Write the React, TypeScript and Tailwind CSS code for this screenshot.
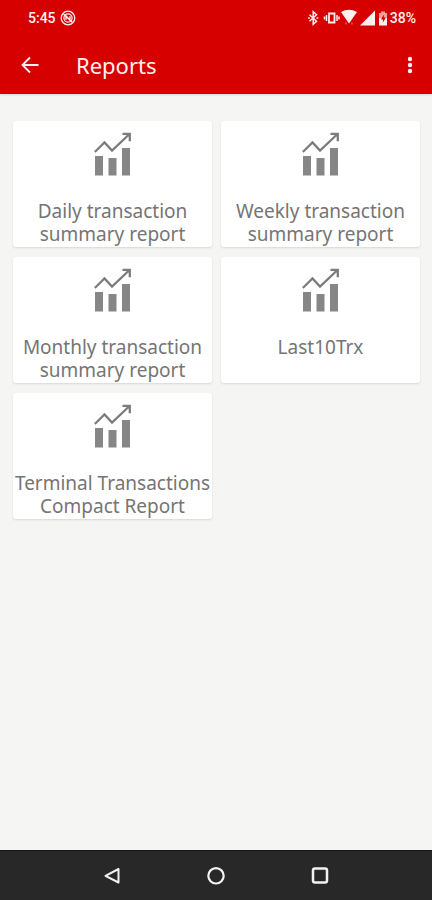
const reports = [
  'Daily transaction summary report',
  'Weekly transaction summary report',
  'Monthly transaction summary report',
  'Last10Trx',
  'Terminal Transactions Compact Report',
]

const ChartIcon = () => (
  <svg width="38" height="44" viewBox="0 0 38 44" fill="none" aria-hidden="true">
    <path d="M1 24h8v19.5H1zM14.5 26h8v17.5h-8zM28 16h8v27.5h-8z" fill="#868686" />
    <path d="M.8 20 10.5 10.500 18 18.500 35.500 2M28.500 1.800h7.300v7.400" stroke="#7c7c7c" strokeWidth="2.3" />
  </svg>
)

const StatusBar = () => (
  <div className="flex h-9 items-center justify-between pl-7 pr-4 text-sm font-medium">
    <div className="flex items-center gap-1">
      <span>5:45</span>
      <svg width="16" height="16" viewBox="0 0 16 16" fill="none" stroke="currentColor" aria-hidden="true">
        <circle cx="8" cy="8" r="6.8" strokeWidth="1.3" />
        <circle cx="8" cy="8" r="4.1" strokeWidth="1.2" />
        <path d="m3.5 4 9 8.5M6 9.8V6l4 4V6.2" strokeWidth="1.4" />
      </svg>
    </div>
    <div className="flex items-center">
      <svg width="82" height="18" viewBox="0 0 82 18" fill="none" aria-hidden="true">
        <path d="m1.5 5.8 7 6.4-3.3 3.1V2.7l3.3 3.1-7 6.4" stroke="currentColor" strokeWidth="1.5" />
        <path d="M0 9h1.8M8.5 9h1.8" stroke="currentColor" strokeWidth="1.6" />
        <path d="M21 4.5h5.5v9H21z" stroke="currentColor" strokeWidth="1.8" />
        <path d="M18.5 6v6M29 6v6M16.5 7.5v3M31 7.5v3" stroke="currentColor" strokeWidth="1.5" />
        <path d="M33 3q8-4.5 16 0L41 14.5z" fill="currentColor" />
        <path d="M37 13.5h2v2h-2zM43 13.5h2v2h-2z" fill="#f23c3c" />
        <path d="M67 1.5v15H52z" fill="currentColor" />
        <path d="M73 2.5h4V4h2v5h-8V4h2z" fill="#f59b9b" />
        <path d="M71 9h8v7.5h-8z" fill="currentColor" />
        <path d="m75.8 5.5-2.8 5h2v3l2.8-5h-2z" fill="#d60000" />
      </svg>
      <span>38%</span>
    </div>
  </div>
)

const AppBar = () => (
  <div className="flex h-[58px] items-center pl-5 pr-4">
    <button type="button" aria-label="Back" className="flex">
      <svg width="20" height="20" viewBox="0 0 20 20" fill="none" stroke="currentColor" strokeWidth="1.8" aria-hidden="true">
        <path d="M18.5 10H3M10 2.5 2.5 10l7.5 7.5" />
      </svg>
    </button>
    <h1 className="ml-9 flex-1 font-['Noto_Sans',sans-serif] text-[22px] leading-6 font-normal">Reports</h1>
    <button type="button" aria-label="More options" className="flex w-3 justify-center">
      <svg width="6" height="18" viewBox="0 0 6 18" fill="currentColor" aria-hidden="true">
        <circle cx="3" cy="3" r="2.2" />
        <circle cx="3" cy="9" r="2.2" />
        <circle cx="3" cy="15" r="2.2" />
      </svg>
    </button>
  </div>
)

const ReportCard = ({ title }: { title: string }) => (
  <button
    type="button"
    className="flex min-h-[126px] flex-col items-center gap-6 rounded-[3px] bg-white pt-[11px] text-[#757575] shadow-[0_1px_2px_rgba(0,0,0,0.12)]"
  >
    <ChartIcon />
    <span className="font-['Noto_Sans',sans-serif] text-[19px] leading-[23px]">{title}</span>
  </button>
)

const NavBar = () => (
  <nav className="flex h-[50px] items-center justify-center border-t border-[#151515] bg-[#282828] text-[#f2f2f2]">
    <button type="button" aria-label="Back" className="flex w-[104px] justify-center">
      <svg width="18" height="18" viewBox="0 0 18 18" fill="none" stroke="currentColor" strokeWidth="2" strokeLinejoin="round" aria-hidden="true">
        <path d="M15.5 2v13.5L2.5 8.8z" />
      </svg>
    </button>
    <button type="button" aria-label="Home" className="flex w-[104px] justify-center">
      <svg width="18" height="18" viewBox="0 0 18 18" fill="none" stroke="currentColor" strokeWidth="2.2" aria-hidden="true">
        <circle cx="9" cy="8.8" r="7.7" />
      </svg>
    </button>
    <button type="button" aria-label="Recent apps" className="flex w-[104px] justify-center">
      <svg width="18" height="18" viewBox="0 0 18 18" fill="none" stroke="currentColor" strokeWidth="2.5" aria-hidden="true">
        <rect x="2" y="1.5" width="14" height="14" rx="2" />
      </svg>
    </button>
  </nav>
)

const App = () => {
  return (
    <div className="flex min-h-screen flex-col bg-[#f5f5f3] font-[Roboto,sans-serif]">
      <header className="bg-[#d60000] text-[#fff0f0] shadow-[0_1px_2px_rgba(0,0,0,0.15)]">
        <StatusBar />
        <AppBar />
      </header>
      <main className="flex-1 pt-[27px] pr-3 pl-[13px]">
        <div className="grid grid-cols-2 gap-x-[9px] gap-y-[10px]">
          {reports.map((title) => (
            <ReportCard key={title} title={title} />
          ))}
        </div>
      </main>
      <NavBar />
    </div>
  )
}

export default App
